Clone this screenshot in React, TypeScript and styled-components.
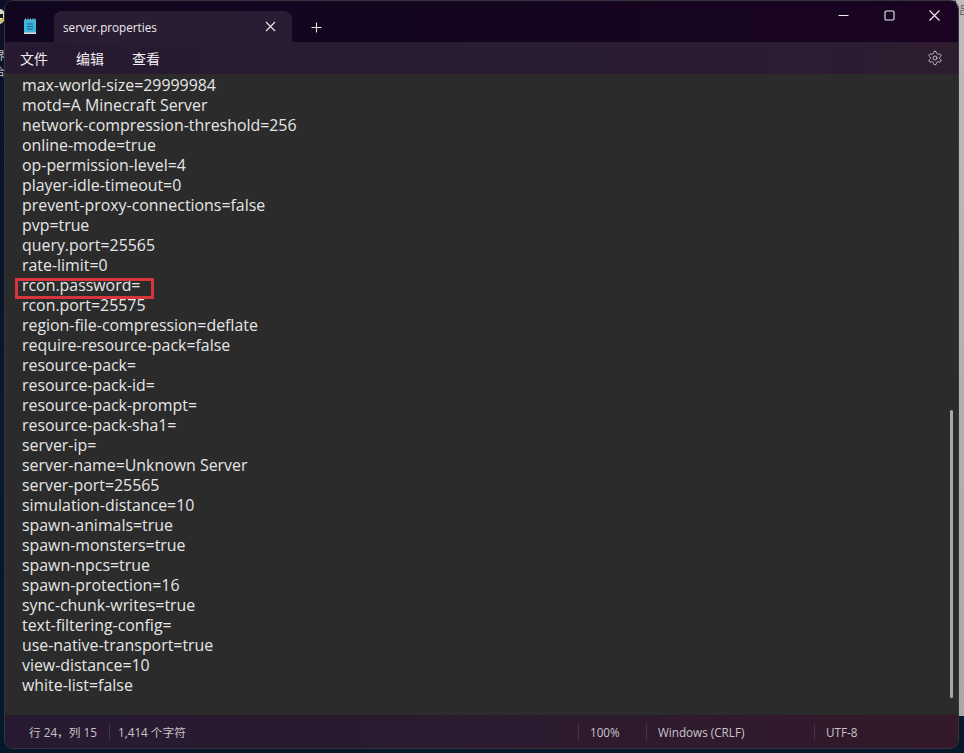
import React from "react";
import styled, { createGlobalStyle } from "styled-components";

const Global = createGlobalStyle`
  html, body { margin: 0; padding: 0; width: 964px; height: 753px; overflow: hidden; background: #0a1a2e; }
  #root { width: 964px; height: 753px; }
`;

const Desktop = styled.div`
  position: relative;
  width: 964px;
  height: 753px;
  overflow: hidden;
  background: linear-gradient(180deg, #0d0f2a 0%, #07182a 50%, #04192c 100%);
  padding: 1px 6px 5px 5px;
  box-sizing: border-box;
  display: flex;
  font-family: "Open Sans", "Noto Sans CJK SC", sans-serif;
`;

const RightEdge = styled.div`
  position: absolute;
  right: 0;
  top: 0;
  width: 8px;
  height: 716px;
  background: linear-gradient(180deg, #bdbbbd 0%, #a8a8a8 100%);
`;

const TopEdge = styled.div`
  position: absolute;
  left: 300px;
  right: 0;
  top: 0;
  height: 1px;
  background: #8d8794;
`;

const LeftGlyph = styled.div`
  position: absolute;
  left: -6px;
  top: 48px;
  width: 11px;
  color: #c8c8c8;
  font-size: 11px;
  line-height: 16px;
  overflow: hidden;
  white-space: pre;
`;

const RightGlyph = styled.div`
  position: absolute;
  right: -6px;
  top: 2px;
  width: 11px;
  z-index: 2;
  color: #55555c;
  font-size: 11px;
  line-height: 16px;
  overflow: hidden;
`;

const DesktopBadge = styled.svg`
  position: absolute;
  left: 0;
  top: 8px;
  width: 6px;
  height: 18px;
`;

const Window = styled.div`
  position: relative;
  z-index: 1;
  flex: 1;
  display: flex;
  flex-direction: column;
  border-radius: 8px;
  overflow: hidden;
  box-shadow: 0 0 0 1px #35343c;
`;

const TitleBar = styled.div`
  height: 41px;
  flex-shrink: 0;
  display: flex;
  align-items: flex-end;
  background: linear-gradient(90deg, #11061f 0%, #15051f 50%, #1a0422 100%);
  padding-left: 5px;
`;

const AppIcon = styled.svg`
  width: 14px;
  height: 17px;
  margin: 0 19px 7px 13px;
  flex-shrink: 0;
`;

const Tab = styled.div`
  width: 238px;
  height: 31px;
  background: #2a1c33;
  border-radius: 8px 8px 0 0;
  display: flex;
  align-items: center;
  justify-content: space-between;
  padding: 0 16px 0 9px;
  box-sizing: border-box;
  color: #ecebee;
  font-size: 11.7px;
  font-weight: 500;
  margin-left: -2px;
`;

const IconButton = styled.svg`
  flex-shrink: 0;
  display: block;
`;

const NewTab = styled.div`
  margin: 0 0 5px 19px;
  height: 20px;
  display: flex;
  align-items: center;
`;

const Spacer = styled.div`
  flex: 1;
`;

const Controls = styled.div`
  display: flex;
  align-self: flex-start;
  height: 28px;
  align-items: center;
  gap: 34.5px;
  padding: 0 18px 0 0;
`;

const MenuBar = styled.div`
  height: 32px;
  flex-shrink: 0;
  display: flex;
  align-items: center;
  background: linear-gradient(90deg, #271a30 0%, #2a1c33 60%, #2e1c30 100%);
  padding: 0 15px 0 15px;
  gap: 28px;
  color: #f0eef2;
  font-size: 14px;
  font-family: "Noto Sans CJK SC", sans-serif;
`;

const Editor = styled.div`
  flex: 1;
  min-height: 0;
  position: relative;
  background: #2b2b2b;
  overflow: hidden;
  padding: 1px 0 0 17px;
`;

const Line = styled.div`
  height: 20px;
  line-height: 20px;
  font-size: 15.9px;
  color: #e6e6e6;
  white-space: pre;
  transform: translateY(0);
`;

const Highlight = styled.div`
  position: absolute;
  left: 10px;
  top: 204px;
  width: 139px;
  height: 21px;
  border: 3px solid #d8343b;
  box-sizing: border-box;
`;

const ScrollThumb = styled.div`
  position: absolute;
  right: 5px;
  top: 336px;
  width: 3px;
  height: 288px;
  background: #a9a9a9;
  border-radius: 1.5px;
`;

const StatusBar = styled.div`
  height: 33px;
  flex-shrink: 0;
  display: flex;
  align-items: center;
  background: linear-gradient(90deg, #271a30 0%, #2b1a30 50%, #33192a 100%);
  color: #c9c5cb;
  font-size: 11.7px;
  font-family: "Open Sans", "Noto Sans CJK SC", sans-serif;
`;

const StatusCell = styled.div<{ $w: number; $pad: number; $divider?: boolean }>`
  width: ${(p) => p.$w}px;
  padding-left: ${(p) => p.$pad}px;
  box-sizing: border-box;
  height: 16px;
  line-height: 16px;
  border-left: ${(p) => (p.$divider ? "1px solid #43384a" : "none")};
  white-space: nowrap;
`;

const lines = [
  "max-world-size=29999984",
  "motd=A Minecraft Server",
  "network-compression-threshold=256",
  "online-mode=true",
  "op-permission-level=4",
  "player-idle-timeout=0",
  "prevent-proxy-connections=false",
  "pvp=true",
  "query.port=25565",
  "rate-limit=0",
  "rcon.password=",
  "rcon.port=25575",
  "region-file-compression=deflate",
  "require-resource-pack=false",
  "resource-pack=",
  "resource-pack-id=",
  "resource-pack-prompt=",
  "resource-pack-sha1=",
  "server-ip=",
  "server-name=Unknown Server",
  "server-port=25565",
  "simulation-distance=10",
  "spawn-animals=true",
  "spawn-monsters=true",
  "spawn-npcs=true",
  "spawn-protection=16",
  "sync-chunk-writes=true",
  "text-filtering-config=",
  "use-native-transport=true",
  "view-distance=10",
  "white-list=false",
];

export default function App() {
  return (
    <Desktop>
      <Global />
      <TopEdge />
      <RightEdge />
      <RightGlyph>吕</RightGlyph>
      <DesktopBadge viewBox="0 0 6 18">
        <path d="M0 1c3 0 5 3 5 7s-2 7-5 8z" fill="#d8d8c8" />
        <path d="M0 14l5-5" stroke="#c8b020" strokeWidth="1.5" />
        <path d="M0 6h3v4h-3z" fill="#1a1a1a" />
      </DesktopBadge>
      <LeftGlyph>{"界\n合"}</LeftGlyph>
      <Window>
        <TitleBar>
          <AppIcon viewBox="0 0 14 17">
            <rect x="1" y="1.5" width="12" height="14" rx="1" fill="#3db4dc" />
            <rect x="1" y="14.5" width="12" height="1.5" fill="#e8d8c8" />
            <path d="M2.5 0.5v2M5 0.5v2M7.5 0.5v2M10 0.5v2M12 0.5v2" stroke="#7fcbe6" strokeWidth="1" />
            <path d="M4 6h6M4 8.5h6M4 11h6" stroke="#1d5f85" strokeWidth="1" />
          </AppIcon>
          <Tab>
            server.properties
            <IconButton width="11" height="11" viewBox="0 0 11 11">
              <path d="M1 1l9 9M10 1l-9 9" stroke="#e6e6e6" strokeWidth="1.2" fill="none" />
            </IconButton>
          </Tab>
          <NewTab>
            <IconButton width="11" height="11" viewBox="0 0 11 11">
              <path d="M5.5 0.5v10M0.5 5.5h10" stroke="#e6e6e6" strokeWidth="1.1" fill="none" />
            </IconButton>
          </NewTab>
          <Spacer />
          <Controls>
            <IconButton width="11" height="11" viewBox="0 0 11 11">
              <path d="M0.5 5.5h10" stroke="#f0f0f0" strokeWidth="1.1" fill="none" />
            </IconButton>
            <IconButton width="11" height="11" viewBox="0 0 11 11">
              <rect x="1" y="1" width="9" height="9" rx="1.2" stroke="#f0f0f0" strokeWidth="1.1" fill="none" />
            </IconButton>
            <IconButton width="11" height="11" viewBox="0 0 11 11">
              <path d="M0.5 0.5l10 10M10.5 0.5l-10 10" stroke="#f0f0f0" strokeWidth="1.1" fill="none" />
            </IconButton>
          </Controls>
        </TitleBar>
        <MenuBar>
          <span>文件</span>
          <span>编辑</span>
          <span>查看</span>
          <Spacer />
          <IconButton width="16" height="16" viewBox="0 0 24 24" fill="none" stroke="#c4bfc8" strokeWidth="1.5" strokeLinecap="round" strokeLinejoin="round">
            <path d="M12.22 2h-.44a2 2 0 0 0-2 2v.18a2 2 0 0 1-1 1.73l-.43.25a2 2 0 0 1-2 0l-.15-.08a2 2 0 0 0-2.73.73l-.22.38a2 2 0 0 0 .73 2.73l.15.1a2 2 0 0 1 1 1.72v.51a2 2 0 0 1-1 1.74l-.15.09a2 2 0 0 0-.73 2.73l.22.38a2 2 0 0 0 2.73.73l.15-.08a2 2 0 0 1 2 0l.43.25a2 2 0 0 1 1 1.73V20a2 2 0 0 0 2 2h.44a2 2 0 0 0 2-2v-.18a2 2 0 0 1 1-1.73l.43-.25a2 2 0 0 1 2 0l.15.08a2 2 0 0 0 2.73-.73l.22-.39a2 2 0 0 0-.73-2.73l-.15-.08a2 2 0 0 1-1-1.74v-.5a2 2 0 0 1 1-1.74l.15-.09a2 2 0 0 0 .73-2.73l-.22-.38a2 2 0 0 0-2.73-.73l-.15.08a2 2 0 0 1-2 0l-.43-.25a2 2 0 0 1-1-1.73V4a2 2 0 0 0-2-2z" />
            <circle cx="12" cy="12" r="3" />
          </IconButton>
        </MenuBar>
        <Editor>
          {lines.map((l) => (
            <Line key={l}>{l}</Line>
          ))}
          <Highlight />
          <ScrollThumb />
        </Editor>
        <StatusBar>
          <StatusCell $w={104} $pad={24}>行 24，列 15</StatusCell>
          <StatusCell $w={469} $pad={8} $divider>1,414 个字符</StatusCell>
          <StatusCell $w={68} $pad={11} $divider>100%</StatusCell>
          <StatusCell $w={168} $pad={11} $divider>Windows (CRLF)</StatusCell>
          <StatusCell $w={100} $pad={11} $divider>UTF-8</StatusCell>
        </StatusBar>
      </Window>
    </Desktop>
  );
}
